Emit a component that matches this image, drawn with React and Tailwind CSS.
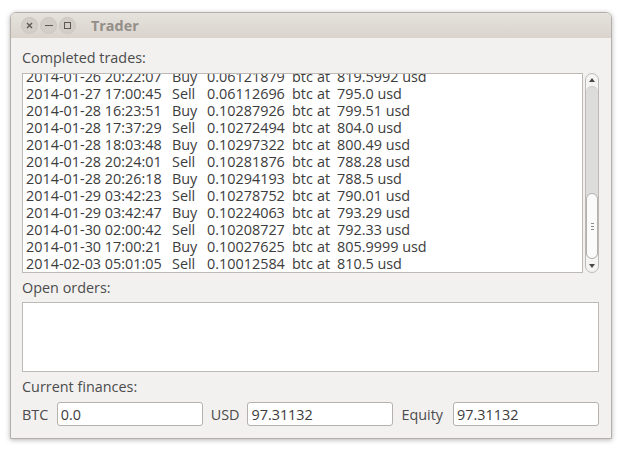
import React from 'react';

const trades = [
  ['2014-01-26 20:22:07', 'Buy', '0.06121879', '819.5992'],
  ['2014-01-27 17:00:45', 'Sell', '0.06112696', '795.0'],
  ['2014-01-28 16:23:51', 'Buy', '0.10287926', '799.51'],
  ['2014-01-28 17:37:29', 'Sell', '0.10272494', '804.0'],
  ['2014-01-28 18:03:48', 'Buy', '0.10297322', '800.49'],
  ['2014-01-28 20:24:01', 'Sell', '0.10281876', '788.28'],
  ['2014-01-28 20:26:18', 'Buy', '0.10294193', '788.5'],
  ['2014-01-29 03:42:23', 'Sell', '0.10278752', '790.01'],
  ['2014-01-29 03:42:47', 'Buy', '0.10224063', '793.29'],
  ['2014-01-30 02:00:42', 'Sell', '0.10208727', '792.33'],
  ['2014-01-30 17:00:21', 'Buy', '0.10027625', '805.9999'],
  ['2014-02-03 05:01:05', 'Sell', '0.10012584', '810.5'],
];

const font = { fontFamily: '"Open Sans", "Noto Sans", sans-serif' };

function Arrow({ down }) {
  return (
    <svg width="6" height="4" viewBox="0 0 6 4" className="block">
      <path d={down ? 'M0 0 L6 0 L3 4 Z' : 'M0 4 L6 4 L3 0 Z'} fill="#4a4a4a" />
    </svg>
  );
}

function ScrollBar() {
  return (
    <div className="w-[14px] h-[200px] rounded-[7px] border border-[#bdbab5] bg-[#f5f4f3] flex flex-col items-center">
      <div className="h-[12px] flex items-center justify-center shrink-0">
        <Arrow />
      </div>
      <div className="flex-1 w-[12px] rounded-[6px] bg-[#dcdcdb] border-t border-[#c9c7c4] flex flex-col justify-end">
        <div className="h-[66px] w-[12px] rounded-[6px] bg-[#fafafa] border border-[#b3b0ab] flex flex-col items-center justify-center gap-[2px]">
          <div className="w-[3px] h-px bg-[#8a8a8a]" />
          <div className="w-[3px] h-px bg-[#8a8a8a]" />
          <div className="w-[3px] h-px bg-[#8a8a8a]" />
        </div>
      </div>
      <div className="h-[13px] flex items-center justify-center shrink-0">
        <Arrow down />
      </div>
    </div>
  );
}

function WinButton({ children }) {
  return (
    <div className="w-[17px] h-[17px] rounded-full bg-[#d3cec7] border border-[#cbc6bf] flex items-center justify-center">
      {children}
    </div>
  );
}

export default function App() {
  return (
    <div className="w-[626px] h-[454px] bg-white pt-[12px] pl-[10px]" style={font}>
      <div className="w-[602px] h-[427px] rounded-t-[6px] border border-[#b4afa8] shadow-[0_1px_5px_rgba(0,0,0,0.3)] flex flex-col overflow-hidden">
        {/* title bar */}
        <div className="h-[25px] shrink-0 bg-gradient-to-b from-[#e5e1dc] to-[#dad4cd] flex items-center pl-[10px]">
          <div className="flex items-center gap-[2px]">
            <WinButton>
              <svg width="7" height="7" viewBox="0 0 7 7">
                <path d="M1 1 L6 6 M6 1 L1 6" stroke="#5c5955" strokeWidth="1.4" />
              </svg>
            </WinButton>
            <WinButton>
              <div className="w-[8px] h-[1.5px] bg-[#5c5955]" />
            </WinButton>
            <WinButton>
              <div className="w-[7px] h-[7px] border border-[#5c5955]" />
            </WinButton>
          </div>
          <span className="ml-[15px] text-[14.4px] font-bold text-[#938e88]">Trader</span>
        </div>

        {/* body */}
        <div className="flex-1 bg-[#f2f1f0] pl-[11px] pr-[12px] pt-[11px] text-[14.4px] leading-[17px] text-[#4c4c4c]">
          <div>Completed trades:</div>
          <div className="mt-[7px] flex gap-[2px]">
            <div className="w-[562px] h-[200px] bg-white border border-[#bdbab5] overflow-hidden text-[#3c3c3c]">
              <div className="-mt-[6px] pl-[3px]">
                {trades.map(([date, type, amount, price]) => (
                  <div key={date} className="flex whitespace-nowrap h-[17px]">
                    <span className="w-[146px]">{date}</span>
                    <span className="w-[35px]">{type}</span>
                    <span className="w-[85px]">{amount}</span>
                    <span className="w-[25px]">btc</span>
                    <span className="w-[20px]">at</span>
                    <span>{price} usd</span>
                  </div>
                ))}
              </div>
            </div>
            <ScrollBar />
          </div>

          <div className="mt-[6px]">Open orders:</div>
          <div className="mt-[6px] h-[70px] bg-white border border-[#bdbab5]" />

          <div className="mt-[6px]">Current finances:</div>
          <div className="mt-[7px] flex items-center">
            <span className="w-[35px]">BTC</span>
            <input
              readOnly
              value="0.0"
              className="w-[146px] h-[24px] px-[3px] bg-white border border-[#b5b2ad] rounded-[3px] text-[#3c3c3c] outline-none"
            />
            <span className="ml-[8px] w-[37px]">USD</span>
            <input
              readOnly
              value="97.31132"
              className="w-[146px] h-[24px] px-[3px] bg-white border border-[#b5b2ad] rounded-[3px] text-[#3c3c3c] outline-none"
            />
            <span className="ml-[8px] w-[52px]">Equity</span>
            <input
              readOnly
              value="97.31132"
              className="w-[146px] h-[24px] px-[3px] bg-white border border-[#b5b2ad] rounded-[3px] text-[#3c3c3c] outline-none"
            />
          </div>
        </div>
      </div>
    </div>
  );
}
